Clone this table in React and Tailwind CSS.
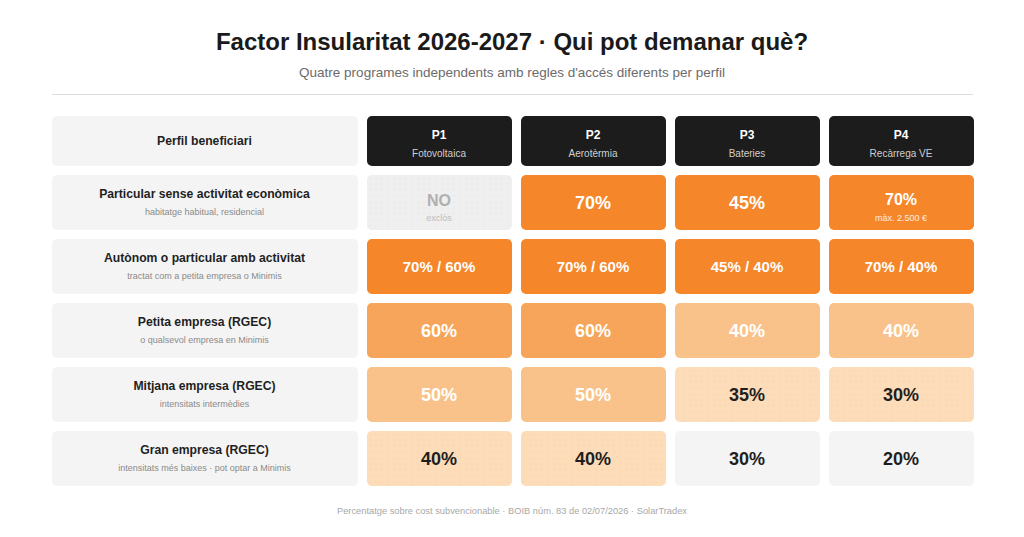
import React from 'react';

const programs = [
  { code: 'P1', name: 'Fotovoltaica' },
  { code: 'P2', name: 'Aerotèrmia' },
  { code: 'P3', name: 'Bateries' },
  { code: 'P4', name: 'Recàrrega VE' },
];

// tone: s = strong, m = medium, l = light, xl = lightest, g = grey, no = excluded
const rows = [
  {
    title: 'Particular sense activitat econòmica',
    sub: 'habitatge habitual, residencial',
    cells: [
      { tone: 'no' },
      { tone: 's', value: '70%', big: true },
      { tone: 's', value: '45%', big: true },
      { tone: 's', value: '70%', note: 'màx. 2.500 €' },
    ],
  },
  {
    title: 'Autònom o particular amb activitat',
    sub: 'tractat com a petita empresa o Minimis',
    cells: [
      { tone: 's', value: '70% / 60%' },
      { tone: 's', value: '70% / 60%' },
      { tone: 's', value: '45% / 40%' },
      { tone: 's', value: '70% / 40%' },
    ],
  },
  {
    title: 'Petita empresa (RGEC)',
    sub: 'o qualsevol empresa en Minimis',
    cells: [
      { tone: 'm', value: '60%', big: true },
      { tone: 'm', value: '60%', big: true },
      { tone: 'l', value: '40%', big: true },
      { tone: 'l', value: '40%', big: true },
    ],
  },
  {
    title: 'Mitjana empresa (RGEC)',
    sub: 'intensitats intermèdies',
    cells: [
      { tone: 'l', value: '50%', big: true },
      { tone: 'l', value: '50%', big: true },
      { tone: 'xl', value: '35%', big: true },
      { tone: 'xl', value: '30%', big: true },
    ],
  },
  {
    title: 'Gran empresa (RGEC)',
    sub: 'intensitats més baixes · pot optar a Minimis',
    cells: [
      { tone: 'xl', value: '40%', big: true },
      { tone: 'xl', value: '40%', big: true },
      { tone: 'g', value: '30%', big: true },
      { tone: 'g', value: '20%', big: true },
    ],
  },
];

const toneClass = {
  s: 'bg-[#f5862a] text-white',
  m: 'bg-[#f7a55a] text-white bg-[radial-gradient(rgba(200,110,40,0.08)_0.6px,transparent_0.8px)] bg-[length:6px_6px]',
  l: 'bg-[#fac28b] text-white bg-[radial-gradient(rgba(200,110,40,0.08)_0.6px,transparent_0.8px)] bg-[length:6px_6px]',
  xl: 'bg-[#fddcb9] text-[#1f1f1f] bg-[radial-gradient(rgba(220,130,60,0.1)_0.6px,transparent_0.8px)] bg-[length:6px_6px]',
  g: 'bg-[#f4f4f4] text-[#1f1f1f]',
  no: 'bg-[#efefef] text-[#b0b0b0] bg-[radial-gradient(rgba(0,0,0,0.035)_0.6px,transparent_0.8px)] bg-[length:6px_6px]',
};

const Cell = ({ cell }) => {
  if (cell.tone === 'no') {
    return (
      <div className={`flex flex-col items-center justify-center rounded-[5px] pt-[10px] ${toneClass.no}`}>
        <span className="text-[16px] font-bold leading-none">NO</span>
        <span className="mt-[5px] text-[9px] leading-none text-[#bdbdbd]">exclòs</span>
      </div>
    );
  }
  return (
    <div className={`flex flex-col items-center justify-center rounded-[5px] ${cell.note ? 'pt-[10px]' : ''} ${toneClass[cell.tone]}`}>
      <span className={`font-bold leading-none ${cell.big ? 'text-[18px]' : cell.note ? 'text-[16px]' : 'text-[15px]'}`}>
        {cell.value}
      </span>
      {cell.note && <span className="mt-[6px] text-[9px] leading-none text-white/85">{cell.note}</span>}
    </div>
  );
};

export default function App() {
  return (
    <div className="h-[537px] w-[1024px] bg-white font-['Liberation_Sans',Arial,sans-serif]">
      <div className="mx-auto w-[921px] pt-[26px]">
        <h1 className="text-center text-[24px] font-bold leading-[32px] text-[#1a1a1a]">
          Factor Insularitat 2026-2027 · Qui pot demanar què?
        </h1>
        <p className="mt-[7px] text-center text-[13.5px] leading-[16px] text-[#6b6b6b]">
          Quatre programes independents amb regles d'accés diferents per perfil
        </p>
        <div className="mt-[13px] h-px bg-[#dcdcdc]" />

        <div className="mt-[21px] grid grid-cols-[306px_repeat(4,145px)] grid-rows-[50px_repeat(5,55px)] gap-[9px]">
          <div className="flex items-center justify-center rounded-[5px] bg-[#f4f4f4] text-[12.2px] font-bold text-[#1f1f1f]">
            Perfil beneficiari
          </div>
          {programs.map(p => (
            <div key={p.code} className="flex flex-col items-center justify-center rounded-[5px] bg-[#1c1c1c] pt-[6px]">
              <span className="text-[12px] font-bold leading-none text-white">{p.code}</span>
              <span className="mt-[8px] text-[10px] leading-none text-[#cfcfcf]">{p.name}</span>
            </div>
          ))}

          {rows.map(row => (
            <React.Fragment key={row.title}>
              <div className="flex flex-col items-center justify-center rounded-[5px] bg-[#f4f4f4]">
                <span className="text-[12.2px] font-bold leading-none text-[#1f1f1f]">{row.title}</span>
                <span className="mt-[7px] text-[9px] leading-none text-[#8a8a8a]">{row.sub}</span>
              </div>
              {row.cells.map((c, i) => (
                <Cell key={i} cell={c} />
              ))}
            </React.Fragment>
          ))}
        </div>

        <p className="mt-[21px] text-center text-[9.3px] leading-none text-[#a8a8a8]">
          Percentatge sobre cost subvencionable · BOIB núm. 83 de 02/07/2026 · SolarTradex
        </p>
      </div>
    </div>
  );
}
